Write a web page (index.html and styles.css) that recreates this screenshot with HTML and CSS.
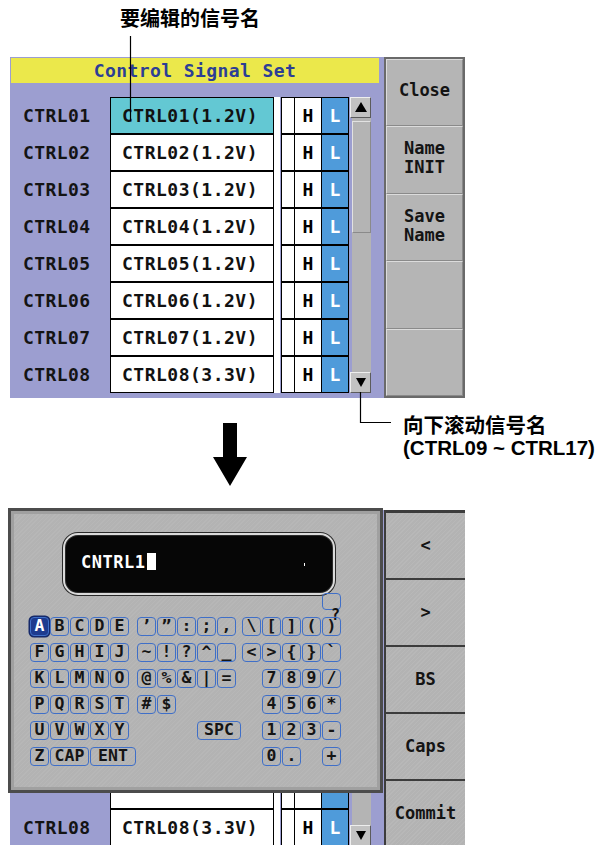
FILE: index.html
```html
<!DOCTYPE html>
<html lang="zh-CN">
<head>
    <meta charset="UTF-8">
    <meta name="viewport" content="width=device-width, initial-scale=1.0">
    <title>Control Signal Set</title>
    <link rel="stylesheet" href="styles.css">
</head>
<body>
    <div class="caption-top">要编辑的信号名</div>

    <!-- Screen 1: signal list -->
    <div class="screen">
        <div class="panel">
            <div class="panel-title">Control Signal Set</div>
            <div class="list">
                <div class="names">
                    <div class="row"><span class="label">CTRL01</span><span class="name selected">CTRL01(1.2V)</span></div>
                    <div class="row"><span class="label">CTRL02</span><span class="name">CTRL02(1.2V)</span></div>
                    <div class="row"><span class="label">CTRL03</span><span class="name">CTRL03(1.2V)</span></div>
                    <div class="row"><span class="label">CTRL04</span><span class="name">CTRL04(1.2V)</span></div>
                    <div class="row"><span class="label">CTRL05</span><span class="name">CTRL05(1.2V)</span></div>
                    <div class="row"><span class="label">CTRL06</span><span class="name">CTRL06(1.2V)</span></div>
                    <div class="row"><span class="label">CTRL07</span><span class="name">CTRL07(1.2V)</span></div>
                    <div class="row"><span class="label">CTRL08</span><span class="name">CTRL08(3.3V)</span></div>
                </div>
                <div class="strip"></div>
                <div class="levels">
                    <div class="level"><span class="cell"></span><span class="cell">H</span><span class="cell on">L</span></div>
                    <div class="level"><span class="cell"></span><span class="cell">H</span><span class="cell on">L</span></div>
                    <div class="level"><span class="cell"></span><span class="cell">H</span><span class="cell on">L</span></div>
                    <div class="level"><span class="cell"></span><span class="cell">H</span><span class="cell on">L</span></div>
                    <div class="level"><span class="cell"></span><span class="cell">H</span><span class="cell on">L</span></div>
                    <div class="level"><span class="cell"></span><span class="cell">H</span><span class="cell on">L</span></div>
                    <div class="level"><span class="cell"></span><span class="cell">H</span><span class="cell on">L</span></div>
                    <div class="level"><span class="cell"></span><span class="cell">H</span><span class="cell on">L</span></div>
                </div>
                <div class="scroll">
                    <div class="scroll-btn"><svg width="12" height="11" viewBox="0 0 12 11"><path d="M6 0L12 10H0Z"/></svg></div>
                    <div class="scroll-track"><div class="scroll-thumb"></div></div>
                    <div class="scroll-btn"><svg width="10" height="10" viewBox="0 0 10 10"><path d="M0 0H10L5 9Z"/></svg></div>
                </div>
            </div>
        </div>
        <div class="softkeys">
            <div class="softkey">Close</div>
            <div class="softkey">Name<br>INIT</div>
            <div class="softkey">Save<br>Name</div>
            <div class="softkey"></div>
            <div class="softkey"></div>
        </div>
    </div>

    <div class="middle">
        <svg class="big-arrow" width="34" height="63" viewBox="0 0 34 63"><path d="M10 0H24V34H34L17 63L0 34H10Z"/></svg>
        <div class="note">向下滚动信号名<br>(CTRL09 ~ CTRL17)</div>
    </div>

    <!-- Screen 2: name entry over the list (rows under the dialog are not redrawn) -->
    <div class="screen lower">
        <div class="panel">
            <div class="panel-title"></div>
            <div class="list">
                <div class="names">
                    <div class="row"><span class="label"></span><span class="name"></span></div>
                    <div class="row"><span class="label"></span><span class="name"></span></div>
                    <div class="row"><span class="label"></span><span class="name"></span></div>
                    <div class="row"><span class="label"></span><span class="name"></span></div>
                    <div class="row"><span class="label"></span><span class="name"></span></div>
                    <div class="row"><span class="label"></span><span class="name"></span></div>
                    <div class="row"><span class="label"></span><span class="name"></span></div>
                    <div class="row"><span class="label">CTRL08</span><span class="name">CTRL08(3.3V)</span></div>
                </div>
                <div class="strip"></div>
                <div class="levels">
                    <div class="level"><span class="cell"></span><span class="cell"></span><span class="cell on"></span></div>
                    <div class="level"><span class="cell"></span><span class="cell"></span><span class="cell on"></span></div>
                    <div class="level"><span class="cell"></span><span class="cell"></span><span class="cell on"></span></div>
                    <div class="level"><span class="cell"></span><span class="cell"></span><span class="cell on"></span></div>
                    <div class="level"><span class="cell"></span><span class="cell"></span><span class="cell on"></span></div>
                    <div class="level"><span class="cell"></span><span class="cell"></span><span class="cell on"></span></div>
                    <div class="level"><span class="cell"></span><span class="cell"></span><span class="cell on"></span></div>
                    <div class="level"><span class="cell"></span><span class="cell">H</span><span class="cell on">L</span></div>
                </div>
                <div class="scroll">
                    <div class="scroll-btn"></div>
                    <div class="scroll-track"></div>
                    <div class="scroll-btn"><svg width="10" height="10" viewBox="0 0 10 10"><path d="M0 0H10L5 9Z"/></svg></div>
                </div>
            </div>
        </div>
        <div class="softkeys textured">
            <div class="softkey">&lt;</div>
            <div class="softkey">&gt;</div>
            <div class="softkey">BS</div>
            <div class="softkey">Caps</div>
            <div class="softkey">Commit</div>
        </div>

        <div class="dialog">
            <div class="entry">CNTRL1<span class="cursor"></span><span class="dot"></span></div>
            <div class="kb">
                <div class="kb-row first"><span class="k at-17"><b class="stray">?</b></span></div>
                <div class="kb-row">
                    <span class="k active">A</span><span class="k">B</span><span class="k">C</span><span class="k">D</span><span class="k">E</span>
                    <span class="k g2">’</span><span class="k">”</span><span class="k">:</span><span class="k">;</span><span class="k">,</span>
                    <span class="k g3">\</span><span class="k">[</span><span class="k">]</span><span class="k">(</span><span class="k">)</span>
                </div>
                <div class="kb-row">
                    <span class="k">F</span><span class="k">G</span><span class="k">H</span><span class="k">I</span><span class="k">J</span>
                    <span class="k g2">~</span><span class="k">!</span><span class="k">?</span><span class="k">^</span><span class="k">_</span>
                    <span class="k g3">&lt;</span><span class="k">&gt;</span><span class="k">{</span><span class="k">}</span><span class="k">`</span>
                </div>
                <div class="kb-row">
                    <span class="k">K</span><span class="k">L</span><span class="k">M</span><span class="k">N</span><span class="k">O</span>
                    <span class="k g2">@</span><span class="k">%</span><span class="k">&amp;</span><span class="k">|</span><span class="k">=</span>
                    <span class="k num">7</span><span class="k">8</span><span class="k">9</span><span class="k">/</span>
                </div>
                <div class="kb-row">
                    <span class="k">P</span><span class="k">Q</span><span class="k">R</span><span class="k">S</span><span class="k">T</span>
                    <span class="k g2">#</span><span class="k">$</span>
                    <span class="k num">4</span><span class="k">5</span><span class="k">6</span><span class="k">*</span>
                </div>
                <div class="kb-row">
                    <span class="k">U</span><span class="k">V</span><span class="k">W</span><span class="k">X</span><span class="k">Y</span>
                    <span class="k spc">SPC</span>
                    <span class="k num">1</span><span class="k">2</span><span class="k">3</span><span class="k">-</span>
                </div>
                <div class="kb-row">
                    <span class="k">Z</span><span class="k cap">CAP</span><span class="k ent">ENT</span>
                    <span class="k num">0</span><span class="k">.</span><span class="k at-17">+</span>
                </div>
            </div>
        </div>
    </div>

    <!-- leader lines of the annotations -->
    <svg class="leaders" width="602" height="845" viewBox="0 0 602 845">
        <path d="M130.5 36V121M360.5 392V422.5H391" stroke="#000" stroke-width="1.2" fill="none"/>
    </svg>
</body>
</html>
```

FILE: styles.css
```css
html, body {
    margin: 0;
    width: 602px;
    height: 845px;
    overflow: hidden;
    background-color: #ffffff;
}

body {
    position: relative;
    font-family: "Liberation Sans", "Noto Sans CJK SC", sans-serif;
    color: #000000;
}

/* annotations */
.caption-top {
    box-sizing: border-box;
    height: 57px;
    padding: 9px 0 0 120px;
    font-size: 20px;
    font-weight: bold;
    line-height: 20px;
}

.middle {
    display: flex;
    align-items: flex-start;
    height: 112px;
}

.big-arrow {
    margin: 25px 0 0 213px;
    fill: #000000;
}

.note {
    margin: 17px 0 0 156px;
    font-size: 20.5px;
    font-weight: bold;
    line-height: 22px;
    white-space: nowrap;
}

.leaders {
    position: absolute;
    left: 0;
    top: 0;
    pointer-events: none;
}

/* instrument screen */
.screen {
    display: flex;
    margin-left: 10px;
    height: 341px;
    font-family: "DejaVu Sans Mono", monospace;
    font-size: 18px;
    font-weight: bold;
}

.screen.lower {
    position: relative;
}

.panel {
    box-sizing: border-box;
    width: 374px;
    padding: 1px 5px 5px 1px;
    background-color: #9c9ed0;
}

.panel-title {
    height: 25px;
    line-height: 26px;
    text-align: center;
    background-color: #ebe84b;
    color: #2c3e95;
    letter-spacing: 0.4px;
}

.list {
    display: flex;
    margin-top: 14px;
}

.row {
    display: flex;
    height: 37px;
}

.label {
    box-sizing: border-box;
    width: 99px;
    padding-left: 12px;
    line-height: 37px;
    letter-spacing: 0.4px;
    color: #141414;
}

.name {
    box-sizing: border-box;
    width: 164px;
    padding-left: 11px;
    border: 1px solid #000000;
    line-height: 35px;
    background-color: #ffffff;
    letter-spacing: 0.5px;
    color: #111111;
}

.name.selected {
    background-color: #63c8d3;
}

.strip {
    width: 6px;
    background-color: #ffffff;
}

.levels {
    margin-left: 1px;
}

.level {
    display: flex;
    height: 37px;
}

.cell {
    box-sizing: border-box;
    width: 13px;
    border: 1px solid #000000;
    border-right: 0;
    background-color: #ffffff;
    text-align: center;
    line-height: 35px;
}

.cell:nth-child(2) {
    width: 27px;
}

.cell.on {
    width: 28px;
    border-right: 1px solid #000000;
    background-color: #4f9bda;
    color: #ffffff;
}

.scroll {
    display: flex;
    flex-direction: column;
    width: 21px;
    margin-left: 1px;
}

.scroll-btn {
    box-sizing: border-box;
    display: flex;
    align-items: center;
    justify-content: center;
    height: 21px;
    border: 1px solid;
    border-color: #eeeeee #5c5c5c #5c5c5c #eeeeee;
    background-color: #c2c2c2;
}

.scroll-btn svg {
    fill: #000000;
}

.scroll-track {
    flex: 1;
    margin: 0 0 0 2px;
    padding-top: 3px;
    background-color: #b4b4b4;
}

.scroll-thumb {
    box-sizing: border-box;
    height: 112px;
    border: 1px solid;
    border-color: #e2e2e2 #8a8a8a #8a8a8a #e2e2e2;
}

/* soft keys on the right */
.softkeys {
    display: flex;
    flex-direction: column;
    box-sizing: border-box;
    width: 81px;
    padding: 2px;
    background-color: #6a6a6a;
}

.softkey {
    flex: 1;
    display: flex;
    align-items: center;
    justify-content: center;
    box-sizing: border-box;
    border: 1px solid;
    border-color: #dcdcdc #8a8a8a #8a8a8a #dcdcdc;
    background-color: #b5b5b5;
    text-align: center;
    font-size: 17px;
    line-height: 19px;
    color: #141414;
    padding-bottom: 4px;
}

.softkeys.textured {
    padding: 3px 0 0 2px;
    background-color: #3c3c3c;
}

.softkeys.textured .softkey {
    flex: none;
    height: 67px;
    border: 0;
    border-bottom: 2px solid #3c3c3c;
    background-color: #b3b3b3;
    background-image: repeating-linear-gradient(135deg, rgba(255, 255, 255, 0.07) 0 1px, transparent 1px 3px);
    padding-bottom: 0;
}

/* character entry dialog */
.dialog {
    position: absolute;
    left: -2px;
    top: -2px;
    box-sizing: border-box;
    width: 375px;
    height: 285px;
    padding: 22px 0 0 19px;
    border: 3px solid #4c4c4c;
    box-shadow: inset 0 0 0 3px #a0a0a0;
    background-color: #b3b3b3;
    background-image: repeating-linear-gradient(135deg, rgba(255, 255, 255, 0.06) 0 1px, transparent 1px 3px);
}

.entry {
    position: relative;
    box-sizing: border-box;
    width: 272px;
    height: 62px;
    margin-left: 33px;
    padding: 17px 0 0 16px;
    border: 2px solid #dadada;
    border-radius: 15px;
    box-shadow: 0 0 0 1px #2a2a2a, inset 0 0 0 1px #2a2a2a;
    background-color: #060606;
    color: #ffffff;
    font-size: 17px;
    line-height: 20px;
    letter-spacing: 0.5px;
}

.cursor {
    display: inline-block;
    width: 9px;
    height: 17px;
    margin-left: 2px;
    vertical-align: -2px;
    background-color: #ffffff;
}

.dot {
    position: absolute;
    left: 239px;
    top: 28px;
    width: 1px;
    height: 3px;
    background-color: #ffffff;
}

.kb {
    margin-top: -2px;
}

.kb-row {
    display: grid;
    grid-template-columns: repeat(5, 20px) 7px repeat(5, 20px) 5px repeat(5, 20px);
    height: 19px;
    margin-top: 7px;
}

.kb-row.first {
    height: 17px;
    margin-top: 0;
}

.k {
    position: relative;
    box-sizing: border-box;
    margin-right: 1px;
    border: 1.5px solid #3f6fc8;
    border-radius: 4px;
    text-align: center;
    font-size: 16.5px;
    line-height: 16px;
    color: #151515;
}

.k.active {
    background-color: #1d3b8f;
    color: #ffffff;
    box-shadow: 0 0 0 1.5px #15296a;
}

.g2 { grid-column-start: 7; }
.g3 { grid-column-start: 13; }
.num { grid-column-start: 14; }
.at-17 { grid-column-start: 17; }
.spc { grid-column: 10 / 13; }
.cap { grid-column: span 2; }
.ent { grid-column: span 3; }

.stray {
    position: absolute;
    left: 8px;
    top: 14px;
    font-size: 15px;
    line-height: 15px;
    color: #111111;
}
```
